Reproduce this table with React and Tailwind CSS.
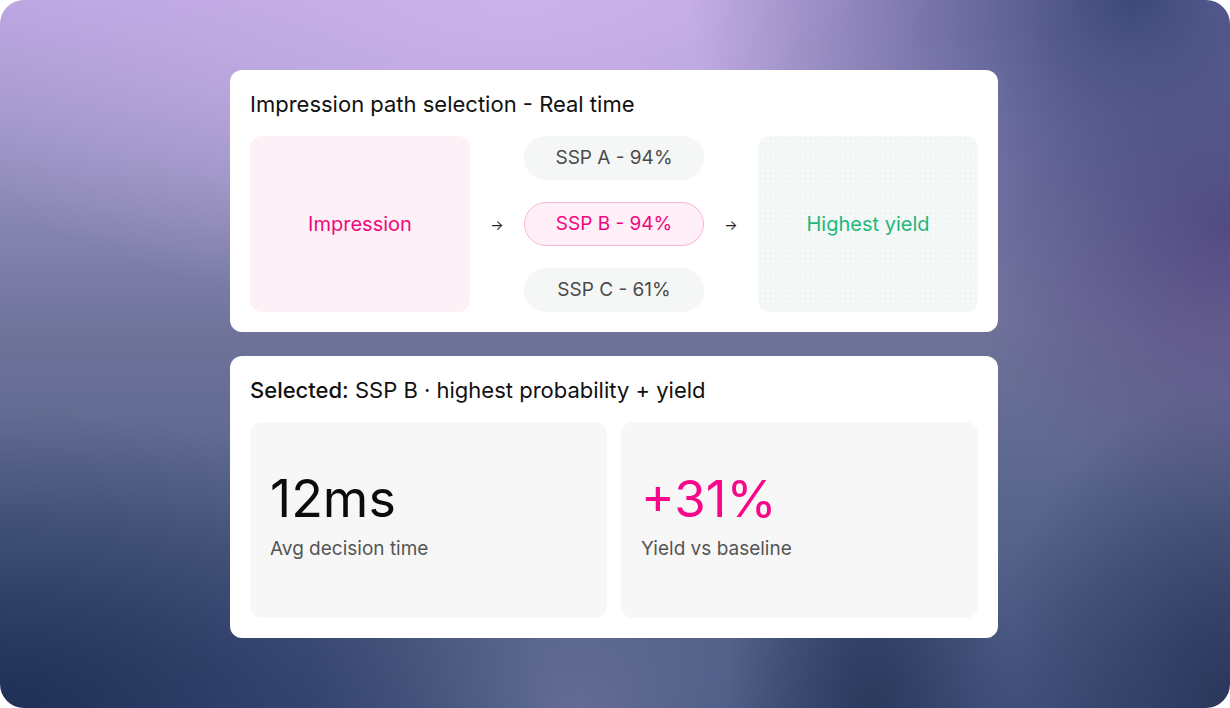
export default function App() {
  const pill = "h-[44px] rounded-full flex items-center justify-center text-[19px]";
  return (
    <div className="w-[1230px] h-[708px] rounded-[24px] overflow-hidden flex flex-col items-center pt-[70px] pr-[2px] gap-6 font-['Inter',sans-serif] bg-[image:radial-gradient(36%_48%_at_92%_0%,#3d497a_0%,transparent_100%),radial-gradient(22%_40%_at_100%_32%,#5b4c85_0%,transparent_100%),radial-gradient(45%_42%_at_0%_100%,#1e3056_0%,transparent_100%),radial-gradient(20%_45%_at_100%_100%,#2a375b_0%,transparent_100%),radial-gradient(12%_38%_at_71%_100%,#2b395d_0%,transparent_100%),radial-gradient(22%_35%_at_47%_100%,#636d93_0%,transparent_100%),radial-gradient(55%_45%_at_42%_0%,#cbb2e9_0%,transparent_100%),linear-gradient(180deg,#b9a3e0_0%,#9590c0_22%,#6d7299_48%,#56638b_75%,#445380_100%)]">
      <section className="w-[768px] bg-white rounded-xl p-5 flex flex-col gap-[18px]">
        <h2 className="text-[22px] leading-7 text-[#111]">Impression path selection - Real time</h2>
        <div className="grid grid-cols-[220px_54px_180px_54px_220px] h-[176px]">
          <div className="rounded-xl bg-[#fdf0f7] flex items-center justify-center text-[20px] text-[#f0077f]">
            Impression
          </div>
          <div className="flex items-center justify-center text-[14px] text-[#222]">→</div>
          <div className="flex flex-col justify-between">
            <div className={`${pill} bg-[#f5f6f6] text-[#4b4b4b]`}>SSP A - 94%</div>
            <div className={`${pill} bg-[#fff0f7] border border-[#fbb3d7] text-[#f0077f]`}>SSP B - 94%</div>
            <div className={`${pill} bg-[#f5f6f6] text-[#4b4b4b]`}>SSP C - 61%</div>
          </div>
          <div className="flex items-center justify-center text-[14px] text-[#222]">→</div>
          <div className="rounded-xl bg-[#f4f8f6] bg-[image:radial-gradient(#e6eeea_0.7px,transparent_0.8px)] bg-[size:5px_5px] flex items-center justify-center text-[20px] text-[#1fb77a]">
            Highest yield
          </div>
        </div>
      </section>
      <section className="w-[768px] bg-white rounded-xl p-5 flex flex-col gap-[18px]">
        <h2 className="text-[22px] leading-7 text-[#111]">
          <span className="font-medium">Selected:</span> SSP B · highest probability + yield
        </h2>
        <div className="grid grid-cols-2 gap-[14px] h-[196px]">
          <div className="rounded-xl bg-[#f7f7f8] flex flex-col justify-center px-5 pb-[9px] gap-[10px]">
            <div className="text-[52px] leading-[56px] text-[#0c0c0c]">12ms</div>
            <div className="text-[19px] leading-6 text-[#555]">Avg decision time</div>
          </div>
          <div className="rounded-xl bg-[#f7f7f8] flex flex-col justify-center px-5 pb-[9px] gap-[10px]">
            <div className="text-[51px] leading-[56px] text-[#f7078a]">+31%</div>
            <div className="text-[19px] leading-6 text-[#555]">Yield vs baseline</div>
          </div>
        </div>
      </section>
    </div>
  );
}
